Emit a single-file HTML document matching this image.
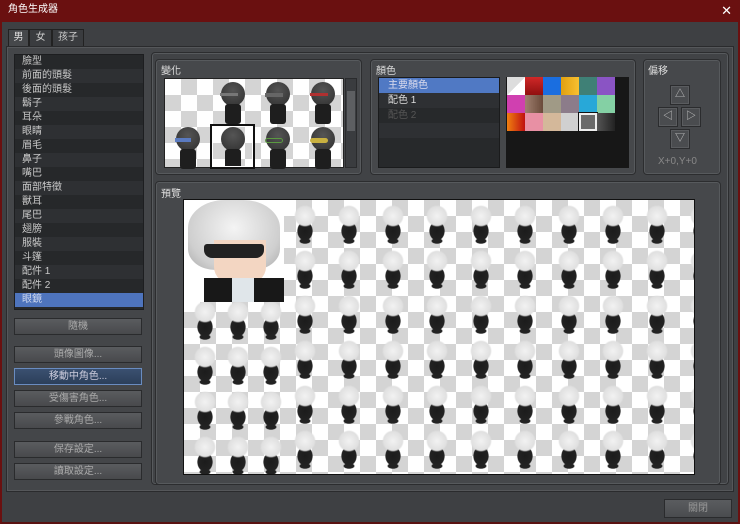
<!DOCTYPE html>
<html><head><meta charset="utf-8">
<style>
*{margin:0;padding:0;box-sizing:border-box}
body{width:740px;height:524px;background:#3c3e41;font-family:"Liberation Sans","Noto Sans CJK TC",sans-serif;font-size:10px;color:#d8d8d8;position:relative;overflow:hidden}
.abs{position:absolute}
#title{left:0;top:0;width:740px;height:22px;background:#6a1010;color:#fff;font-size:10px;line-height:20px;padding-left:8px}
#frame{left:0;top:22px;width:740px;height:502px;border-left:2px solid #6a1010;border-right:2px solid #6a1010;border-bottom:2px solid #5a1212;background:#3e4043}
.tab{top:29px;height:17px;border:1px solid #222;border-bottom:none;background:#3a3c3f;color:#ccc;text-align:center;line-height:15px;font-size:10px}
#main{left:6px;top:46px;width:728px;height:446px;border:1px solid #2a2b2d;background:#444649;box-shadow:inset 0 0 0 1px #55575a}
#list{left:14px;top:54px;width:130px;height:256px;background:#26282a;border:1px solid #1d1e20}
.li{height:14px;line-height:14px;padding-left:7px;color:#c8c8c8;font-size:10px}
.li:nth-child(even){background:#2e3033}
.btn{left:14px;width:128px;height:17px;background:linear-gradient(#5a5c5f,#48494c);border:1px solid #2a2b2d;color:#aaa;text-align:center;line-height:15px;font-size:10px}
.grp{border:1px solid #2c2d2f;border-radius:4px;background:#46484b;box-shadow:inset 0 0 0 1px #575a5d}
.lbl{color:#ddd;font-size:10px}
.chk{background-color:#fff;background-image:linear-gradient(45deg,#d4d4d4 25%,transparent 25%,transparent 75%,#d4d4d4 75%),linear-gradient(45deg,#d4d4d4 25%,transparent 25%,transparent 75%,#d4d4d4 75%);background-size:32px 32px;background-position:0 0,16px 16px}
.sil{position:absolute;width:24px;height:44px}
.sil:before{content:"";position:absolute;left:0;top:0;width:24px;height:24px;border-radius:50%;background:radial-gradient(circle at 50% 35%,#555,#2e2e2e)}
.sil:after{content:"";position:absolute;left:4px;top:22px;width:16px;height:20px;background:#1e1e1e;border-radius:3px}
.pc{position:absolute;width:18px;height:18px}
.arr{position:absolute;width:20px;height:20px;background:#4a4c4f;border:1px solid #2b2c2e;box-shadow:inset 0 0 0 1px #5a5c5f;color:#ccc;font-size:10px;text-align:center;line-height:18px}
.spr{background-image:
 radial-gradient(ellipse 11px 11px at 21px 16px,#f2f2f2 0,#e0e0e0 85%,transparent 100%),
 radial-gradient(ellipse 8px 10px at 21px 31px,#1c1c1c 0,#222 90%,transparent 100%),
 radial-gradient(ellipse 6px 3px at 21px 41px,#222 0,#222 80%,transparent 100%);
 background-size:44px 45px;background-repeat:repeat}
</style></head><body>
<div id="frame" class="abs"></div>
<div id="title" class="abs">角色生成器</div>
<div class="abs" style="right:8px;top:3px;color:#fff;font-size:13px">✕</div>
<div id="main" class="abs"></div>
<div class="tab abs" style="left:8px;width:21px;background:#46484b;color:#ddd">男</div>
<div class="tab abs" style="left:29px;width:23px">女</div>
<div class="tab abs" style="left:52px;width:32px">孩子</div>

<div id="list" class="abs">
<div class="li">臉型</div><div class="li">前面的頭髮</div><div class="li">後面的頭髮</div><div class="li">鬍子</div><div class="li">耳朵</div><div class="li">眼睛</div><div class="li">眉毛</div><div class="li">鼻子</div><div class="li">嘴巴</div><div class="li">面部特徵</div><div class="li">獸耳</div><div class="li">尾巴</div><div class="li">翅膀</div><div class="li">服裝</div><div class="li">斗篷</div><div class="li">配件 1</div><div class="li">配件 2</div><div class="li" style="background:#4e74bd;color:#cfd8ee">眼鏡</div>
</div>
<div class="btn abs" style="top:318px">隨機</div>
<div class="btn abs" style="top:346px">頭像圖像...</div>
<div class="btn abs" style="top:368px;background:linear-gradient(#3a5070,#2c3f5a);border-color:#6a8cc0;color:#ccd">移動中角色...</div>
<div class="btn abs" style="top:390px">受傷害角色...</div>
<div class="btn abs" style="top:412px">參戰角色...</div>
<div class="btn abs" style="top:441px">保存設定...</div>
<div class="btn abs" style="top:463px">讀取設定...</div>

<div class="abs grp" style="left:151px;top:52px;width:578px;height:433px;background:#414346"></div>

<div class="abs grp" style="left:155px;top:59px;width:207px;height:116px"></div>
<div class="abs lbl" style="left:161px;top:62px">變化</div>
<div class="abs chk" style="left:164px;top:78px;width:180px;height:90px;border:1px solid #222">
 <div class="sil" style="left:56px;top:3px"></div>
 <div class="sil" style="left:101px;top:3px"></div>
 <div class="sil" style="left:146px;top:3px"></div>
 <div class="sil" style="left:11px;top:48px"></div>
 <div class="sil" style="left:56px;top:48px"></div>
 <div class="sil" style="left:101px;top:48px"></div>
 <div class="sil" style="left:146px;top:48px"></div>
 <div class="abs" style="left:45px;top:45px;width:45px;height:45px;border:2px solid #111;box-shadow:inset 0 0 0 1px #fff"></div>
 <div class="abs" style="left:10px;top:59px;width:16px;height:4px;background:#5a7ac0"></div>
 <div class="abs" style="left:100px;top:59px;width:18px;height:5px;border:1px solid #5a9a40;border-radius:3px"></div>
 <div class="abs" style="left:145px;top:59px;width:18px;height:5px;background:#c8b040;border-radius:3px"></div>
 <div class="abs" style="left:145px;top:14px;width:18px;height:3px;background:#b03030"></div>
 <div class="abs" style="left:55px;top:14px;width:18px;height:3px;background:#777"></div>
 <div class="abs" style="left:100px;top:14px;width:18px;height:4px;background:#666"></div>
</div>
<div class="abs" style="left:345px;top:78px;width:12px;height:90px;background:#3a3c3f;border:1px solid #2a2b2d">
 <div class="abs" style="left:1px;top:12px;width:8px;height:40px;background:#5d5f62"></div>
</div>

<div class="abs grp" style="left:370px;top:59px;width:266px;height:116px"></div>
<div class="abs lbl" style="left:376px;top:62px">顏色</div>
<div class="abs" style="left:378px;top:77px;width:122px;height:91px;background:#27292b;border:1px solid #1a1b1c">
 <div style="height:15px;background:#5079c4;color:#dde;padding-left:9px;line-height:15px">主要顏色</div>
 <div style="height:15px;padding-left:9px;line-height:15px;color:#ddd;background:#2e3033">配色 1</div>
 <div style="height:15px;padding-left:9px;line-height:15px;color:#555">配色 2</div>
 <div style="height:15px;background:#2e3033"></div>
 <div style="height:15px"></div>
</div>
<div class="abs" style="left:506px;top:77px;width:123px;height:91px;background:#171717">
 <div class="pc" style="left:1px;top:0;background:linear-gradient(135deg,#ddd 50%,#fff 50%)"></div>
 <div class="pc" style="left:19px;top:0;background:linear-gradient(#d02828,#901010)"></div>
 <div class="pc" style="left:37px;top:0;background:#1a6ee0"></div>
 <div class="pc" style="left:55px;top:0;background:linear-gradient(90deg,#e0a010,#f8c030)"></div>
 <div class="pc" style="left:73px;top:0;background:#3f8076"></div>
 <div class="pc" style="left:91px;top:0;background:#8a54c4"></div>
 <div class="pc" style="left:1px;top:18px;background:#d040b0"></div>
 <div class="pc" style="left:19px;top:18px;background:linear-gradient(90deg,#a08070,#6a4a3a)"></div>
 <div class="pc" style="left:37px;top:18px;background:#a09a86"></div>
 <div class="pc" style="left:55px;top:18px;background:#8c7c8a"></div>
 <div class="pc" style="left:73px;top:18px;background:#28a8d8"></div>
 <div class="pc" style="left:91px;top:18px;background:#84d0a4"></div>
 <div class="pc" style="left:1px;top:36px;background:linear-gradient(90deg,#f08010,#c01010)"></div>
 <div class="pc" style="left:19px;top:36px;background:#e890a4"></div>
 <div class="pc" style="left:37px;top:36px;background:#d4b89a"></div>
 <div class="pc" style="left:55px;top:36px;background:#d0d0d0"></div>
 <div class="pc" style="left:73px;top:36px;background:#6a6a6a;border:2px solid #eee;box-shadow:0 0 0 1px #111"></div>
 <div class="pc" style="left:91px;top:36px;background:linear-gradient(90deg,#555,#222)"></div>
</div>

<div class="abs grp" style="left:643px;top:59px;width:78px;height:116px"></div>
<div class="abs lbl" style="left:648px;top:62px">偏移</div>
<div class="arr" style="left:670px;top:85px">△</div>
<div class="arr" style="left:658px;top:107px">◁</div>
<div class="arr" style="left:681px;top:107px">▷</div>
<div class="arr" style="left:670px;top:129px">▽</div>
<div class="abs" style="left:658px;top:156px;color:#888;font-size:10px">X+0,Y+0</div>

<div class="abs grp" style="left:155px;top:181px;width:566px;height:304px"></div>
<div class="abs lbl" style="left:161px;top:185px">預覽</div>
<div class="abs chk" style="left:183px;top:199px;width:512px;height:276px;border:1px solid #111;overflow:hidden">
 <div class="abs spr" style="left:100px;top:0;width:412px;height:276px"></div>
 <div class="abs spr" style="left:0;top:96px;width:100px;height:180px;background-size:33px 45px"></div>
 <div class="abs" style="left:0;top:0;width:100px;height:102px;background:#fff">
  <div class="abs" style="left:4px;top:0;width:92px;height:70px;background:radial-gradient(ellipse at 50% 40%,#f4f4f4,#cfcfcf 70%,#aaa);border-radius:40% 40% 30% 30%"></div>
  <div class="abs" style="left:30px;top:40px;width:52px;height:45px;background:#f3d6c2;border-radius:0 0 40% 40%"></div>
  <div class="abs" style="left:20px;top:44px;width:60px;height:14px;background:#222;border-radius:3px 3px 8px 8px"></div>
  <div class="abs" style="left:20px;top:78px;width:80px;height:24px;background:#181818"></div>
  <div class="abs" style="left:48px;top:78px;width:22px;height:24px;background:#e0e6ea"></div>
 </div>
</div>

<div class="abs" style="left:664px;top:499px;width:68px;height:19px;background:linear-gradient(#5a5c5f,#4a4c4f);border:1px solid #2a2b2d;color:#999;text-align:center;line-height:17px">關閉</div>
</body></html>
